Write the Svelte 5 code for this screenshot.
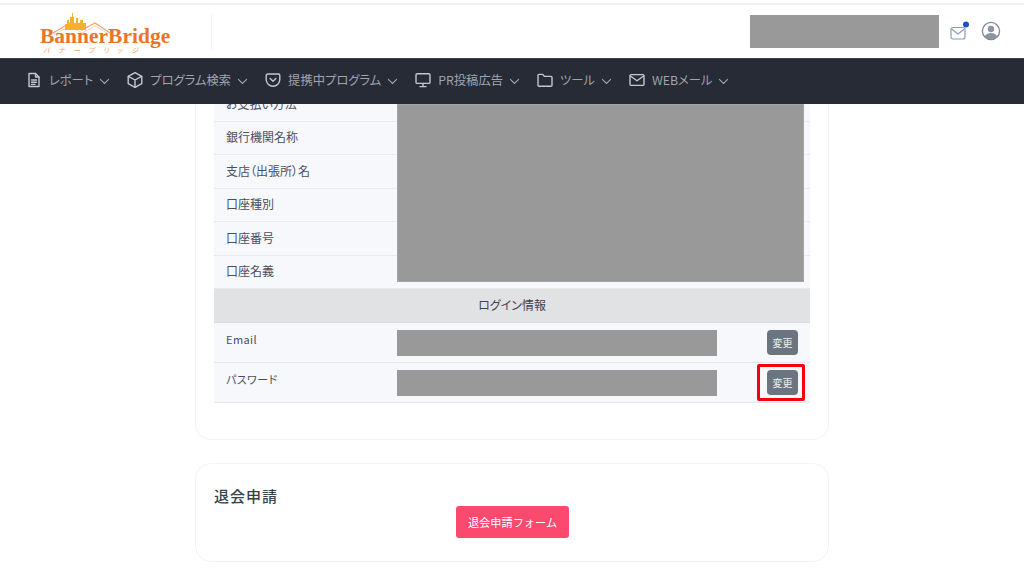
<script>
  const navItems = [
    { label: 'レポート', icon: 'doc' },
    { label: 'プログラム検索', icon: 'box' },
    { label: '提携中プログラム', icon: 'pocket' },
    { label: 'PR投稿広告', icon: 'monitor' },
    { label: 'ツール', icon: 'folder' },
    { label: 'WEBメール', icon: 'mail' }
  ];
  const bankRows = ['銀行機関名称', '支店（出張所）名', '口座種別', '口座番号', '口座名義'];
  const loginRows = ['Email', 'パスワード'];
</script>

<div class="page">
  <header class="topbar">
    <div class="logo">
      <svg class="skyline" viewBox="0 0 70 24" width="70" height="24" fill="none">
        <path d="M4 20 L21 10 L33 17 L46 10 L61 20" stroke="#f0a070" stroke-width="1.2"/>
        <path d="M8 20 L21 13 L33 20 L46 13 L58 20" stroke="#f6c5a4" stroke-width="0.8"/>
        <path d="M16 17v-6h2v-4h2v4h1v-7h2v-4h1v4h1v6h2v-5h2v5h2v-3h3v3h3v7z" fill="#f4b12e"/>
      </svg>
      <span class="logo-name">BannerBridge</span>
      <span class="logo-sub">バナーブリッジ</span>
    </div>
    <div class="divider"></div>
    <div class="grow"></div>
    <div class="redact user-box"></div>
    <svg class="mail" viewBox="0 0 18 18" width="18" height="18" fill="none" stroke="#8d9bb5" stroke-width="1.2">
      <rect x="1" y="4.5" width="14" height="11.5" rx="2"/>
      <path d="M1.5 6 L8 11 L14.5 6"/>
      <circle cx="16" cy="1.5" r="3" fill="#1d4fd1" stroke="none"/>
    </svg>
    <svg class="user" viewBox="0 0 20 20" width="20" height="20">
      <circle cx="10" cy="10" r="8.6" fill="none" stroke="#7f8793" stroke-width="1.3"/>
      <circle cx="10" cy="8" r="3.2" fill="#8d95a3"/>
      <path d="M3.8 15.6 C5 12.8 7.5 12 10 12 C12.5 12 15 12.8 16.2 15.6 C14.6 17.6 12.4 18.6 10 18.6 C7.6 18.6 5.4 17.6 3.8 15.6z" fill="#8d95a3"/>
    </svg>
  </header>

  <nav class="nav">
    {#each navItems as item}
      <div class="nav-item">
        <svg viewBox="0 0 16 16" width="16" height="16" fill="none" stroke="#c3c7cf" stroke-width="1.4" stroke-linejoin="round" stroke-linecap="round">
          {#if item.icon === 'doc'}
            <path d="M3 1.5h6.5L13 5v9.5H3z"/><path d="M9.5 1.5V5H13M5.5 8h5M5.5 10.2h5M5.5 12.4h3.5"/>
          {:else if item.icon === 'box'}
            <path d="M8 .6 14.8 4.3v7.4L8 15.4 1.2 11.7V4.3z"/><path d="M1.4 4.4 8 8l6.6-3.6M8 8v7.2"/>
          {:else if item.icon === 'pocket'}
            <path d="M2.6 2h10.8A1.4 1.4 0 0 1 14.8 3.4V7.5A6.8 6.8 0 0 1 1.2 7.5V3.4A1.4 1.4 0 0 1 2.6 2z"/><path d="M5.2 6.5 8 9.2l2.8-2.7"/>
          {:else if item.icon === 'monitor'}
            <rect x="1" y="1.8" width="14" height="9.6" rx="1.2"/><path d="M8 11.4v3M5 14.6h6"/>
          {:else if item.icon === 'folder'}
            <path d="M1 3.4c0-.6.4-1 1-1h3.8l1.6 2H14c.6 0 1 .4 1 1v7.8c0 .6-.4 1-1 1H2c-.6 0-1-.4-1-1z"/>
          {:else}
            <rect x="1" y="2.6" width="14" height="10.8" rx="1.2"/><path d="M1.4 4 8 8.8 14.6 4"/>
          {/if}
        </svg>
        <span class="nav-label">{item.label}</span>
        <svg class="chev" viewBox="0 0 12 8" width="11" height="7" fill="none" stroke="#a3a8b2" stroke-width="1.2"><path d="M1 1.2 6 6.2l5-5"/></svg>
      </div>
    {/each}
  </nav>

  <main class="scroller">
    <section class="card card-info">
      <div class="bank">
        <div class="row row-first"><span>お支払い方法</span></div>
        {#each bankRows as label}
          <div class="row"><span>{label}</span></div>
        {/each}
        <div class="redact bank-cover"></div>
      </div>
      <div class="table-head">ログイン情報</div>
      {#each loginRows as label, i}
        <div class="login-row" class:second={i === 1}>
          <span class="login-label">{label}</span>
          <div class="redact login-value"></div>
          <div class="btn-wrap" class:marked={i === 1}>
            <button class="change">変更</button>
          </div>
        </div>
      {/each}
    </section>

    <section class="card card-leave">
      <h2>退会申請</h2>
      <button class="leave">退会申請フォーム</button>
    </section>
  </main>
</div>

<style>
  :global(body) {
    margin: 0;
    background: #fff;
  }
  .page {
    width: 1024px;
    height: 584px;
    overflow: hidden;
    display: flex;
    flex-direction: column;
    font-family: "Noto Sans CJK JP", "Noto Sans", sans-serif;
    font-feature-settings: "palt";
    color: #4a4f5c;
  }
  .topbar {
    height: 55px;
    flex: none;
    box-sizing: border-box;
    border-top: 2px solid #f1f1f3;
    margin-top: 3px;
    display: flex;
    align-items: center;
    padding-left: 40px;
  }
  .logo {
    width: 130px;
    height: 44px;
    position: relative;
    flex: none;
  }
  .skyline {
    position: absolute;
    left: 9px;
    top: 3px;
    overflow: visible;
  }
  .logo-name {
    position: absolute;
    left: 0;
    top: 16px;
    font-family: "Liberation Serif", serif;
    font-weight: 700;
    font-size: 21.5px;
    line-height: 20px;
    color: #ec7429;
    white-space: nowrap;
  }
  .logo-sub {
    position: absolute;
    left: 3px;
    top: 36px;
    font-size: 7px;
    line-height: 8px;
    letter-spacing: 8.5px;
    font-style: italic;
    color: #f3a06a;
    white-space: nowrap;
  }
  .divider {
    width: 1px;
    height: 36px;
    margin-left: 41px;
    background: #f0f1f3;
  }
  .grow {
    flex: 1;
  }
  .redact {
    background: #999;
  }
  .user-box {
    width: 189px;
    height: 33px;
  }
  .mail {
    margin-left: 11px;
    overflow: visible;
  }
  .user {
    margin-left: 13px;
    margin-right: 23px;
    margin-bottom: 1px;
  }
  .nav {
    height: 46px;
    flex: none;
    box-sizing: border-box;
    background: #272b36;
    border-top: 1px solid #3a3e48;
    display: flex;
    align-items: center;
    padding-left: 26px;
    padding-bottom: 3px;
    gap: 17px;
  }
  .nav-item {
    display: flex;
    align-items: center;
  }
  .nav-label {
    margin-left: 7px;
    font-size: 12.3px;
    color: #9fa4ae;
    white-space: nowrap;
  }
  .chev {
    margin-left: 6px;
    margin-top: 2px;
  }
  .scroller {
    flex: 1;
    min-height: 0;
    overflow: hidden;
    padding: 0 195px;
  }
  .card {
    box-sizing: border-box;
    border: 1px solid #f2f3f5;
    border-radius: 16px;
    padding: 0 18px;
  }
  .card-info {
    height: 336px;
    border-top: 0;
    border-top-left-radius: 0;
    border-top-right-radius: 0;
  }
  .bank {
    position: relative;
  }
  .row {
    height: 33.5px;
    box-sizing: border-box;
    background: #f6f8fc;
    border-bottom: 1px solid #e8eaef;
    padding: 0 0 2px 12px;
    font-size: 12px;
    display: flex;
    align-items: center;
  }
  .row-first {
    height: 17.5px;
    padding-bottom: 0;
    align-items: flex-end;
    overflow: hidden;
  }
  .row-first span {
    line-height: 18px;
    margin-bottom: 8px;
  }
  .bank-cover {
    position: absolute;
    left: 183px;
    top: 0;
    width: 407px;
    height: 178px;
    box-shadow: 0 0 0 1px #a5a5a5 inset;
  }
  .table-head {
    height: 33.5px;
    background: #e1e2e4;
    border-bottom: 1px solid #d9dadd;
    box-sizing: border-box;
    padding-bottom: 2px;
    display: flex;
    align-items: center;
    justify-content: center;
    font-size: 12px;
    color: #3f4450;
  }
  .login-row {
    height: 40px;
    box-sizing: border-box;
    background: #f6f8fc;
    border-bottom: 1px solid #e4e6ec;
    display: grid;
    padding: 7px 12px 0 12px;
    grid-template-columns: 171px 320px 1fr;
    align-items: start;
  }
  .login-label {
    font-size: 11px;
    line-height: 19px;
    letter-spacing: 0.4px;
  }
  .login-value {
    height: 26px;
  }
  .btn-wrap {
    justify-self: end;
    position: relative;
  }
  .marked::after {
    content: "";
    position: absolute;
    left: -10px;
    right: -7px;
    top: -6px;
    bottom: -6px;
    border: 3px solid #f4000f;
    border-radius: 2px;
    pointer-events: none;
  }
  .change {
    display: block;
    width: 31px;
    height: 25px;
    padding: 0;
    border: 0;
    border-radius: 4px;
    background: #6c747f;
    color: #eef0f2;
    font-family: inherit;
    font-size: 10px;
  }
  .card-leave {
    height: 99px;
    margin-top: 23px;
    position: relative;
    padding-top: 21px;
  }
  h2 {
    margin: 0;
    font-size: 15px;
    line-height: 22px;
    font-weight: 500;
    letter-spacing: 1px;
    color: #3a3f4c;
  }
  .leave {
    position: absolute;
    left: 260px;
    top: 42px;
    width: 113px;
    height: 32px;
    border: 0;
    border-radius: 3px;
    background: #fb4a6e;
    color: #fff;
    font-family: inherit;
    font-size: 11.2px;
    padding: 0;
  }
</style>
